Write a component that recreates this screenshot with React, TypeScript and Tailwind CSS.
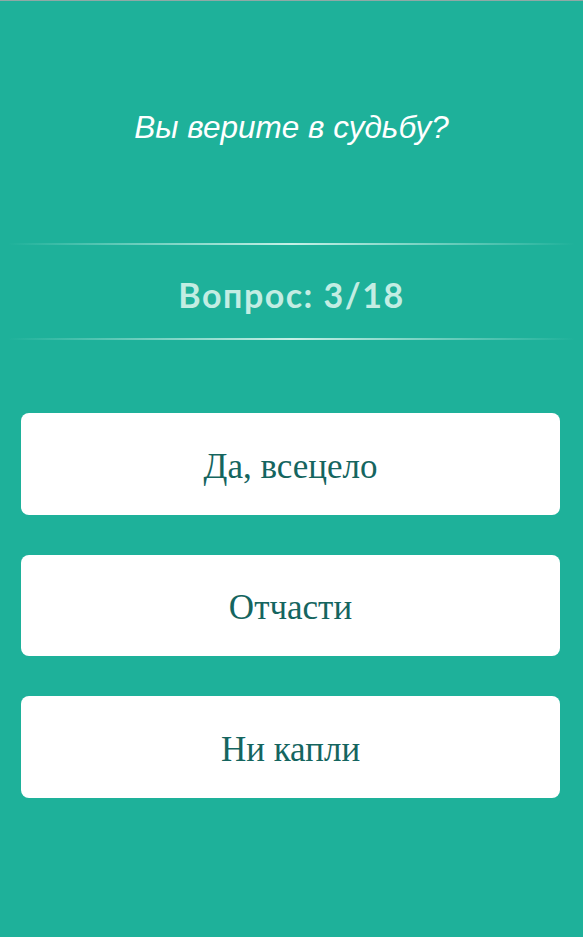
const answers = ["Да, всецело", "Отчасти", "Ни капли"];

function Divider() {
    return <div className="h-[2px] mx-[8px] bg-gradient-to-r from-transparent via-[#c6f0e6] to-transparent" />;
}

export default function App() {
    return (
        <div className="min-h-[937px] bg-[#1eb19a] border-t border-[#8fa9a6]">
            <div className="h-[242px] pt-[108px]">
                <h1 className="text-center text-white italic text-[31.5px] leading-[36px] font-['Liberation_Sans',sans-serif]">
                    Вы верите в судьбу?
                </h1>
            </div>
            <Divider />
            <div className="h-[93px] flex items-center justify-center pt-[5px]">
                <span className="text-[#c3ede3] font-bold text-[34px] tracking-[1.5px] font-['Lato',sans-serif]">
                    Вопрос: 3/18
                </span>
            </div>
            <Divider />
            <div className="flex flex-col gap-[40px] pl-[21px] pr-[23px] pt-[73px]">
                {answers.map((answer) => (
                    <button
                        key={answer}
                        className="h-[101.5px] pt-[6px] bg-white rounded-[8px] text-[#15655f] text-[35px] font-['Liberation_Serif',serif]"
                    >
                        {answer}
                    </button>
                ))}
            </div>
        </div>
    );
}
